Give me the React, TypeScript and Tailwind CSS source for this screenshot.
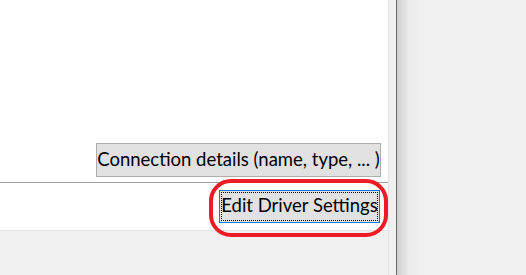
import React from "react";

export default function App() {
  const font = { fontFamily: 'Lato, "Noto Sans", sans-serif' };
  return (
    <div className="flex h-[275px] w-[526px] overflow-hidden bg-[#f0f0f0]" style={font}>
      <div className="flex w-[388px] flex-col">
        <div className="flex h-[183px] flex-col justify-end border-b border-[#a0a0a0] bg-white pb-[5px] pr-[7px]">
          <div className="flex justify-end">
            <div className="flex h-[34px] w-[285px] items-center justify-center whitespace-nowrap border border-[#adadad] bg-[#e1e1e1] pb-[2px] text-[18.5px] leading-none text-black">
              Connection details (name, type, ... )
            </div>
          </div>
        </div>
        <div className="relative flex h-[48px] items-start justify-end border-b border-[#e3e3e3] bg-white pr-[8px] pt-[7px]">
          <div className="flex h-[33px] w-[161px] items-center justify-center border border-[#0078d7] bg-[#e1e1e1] p-px">
            <div className="flex h-full w-full items-center justify-center whitespace-nowrap border border-dotted border-black pb-[2px] text-[18.5px] leading-none text-black">
              Edit Driver Settings
            </div>
          </div>
          <div className="pointer-events-none absolute left-[209px] top-[-4px] h-[58px] w-[179px] rounded-[22px] border-[4px] border-[#ed1c24]" />
        </div>
        <div className="flex-1 bg-[#f0f0f0]" />
      </div>
      <div className="w-[8px] border-l border-[#e3e3e3] bg-[#f0f0f0]" />
      <div className="w-px bg-[#6b6b6b]" />
      <div className="flex-1 bg-[linear-gradient(to_right,#cfcfcf,#ebebeb_12px,#f0f0f0_24px)]" />
    </div>
  );
}
